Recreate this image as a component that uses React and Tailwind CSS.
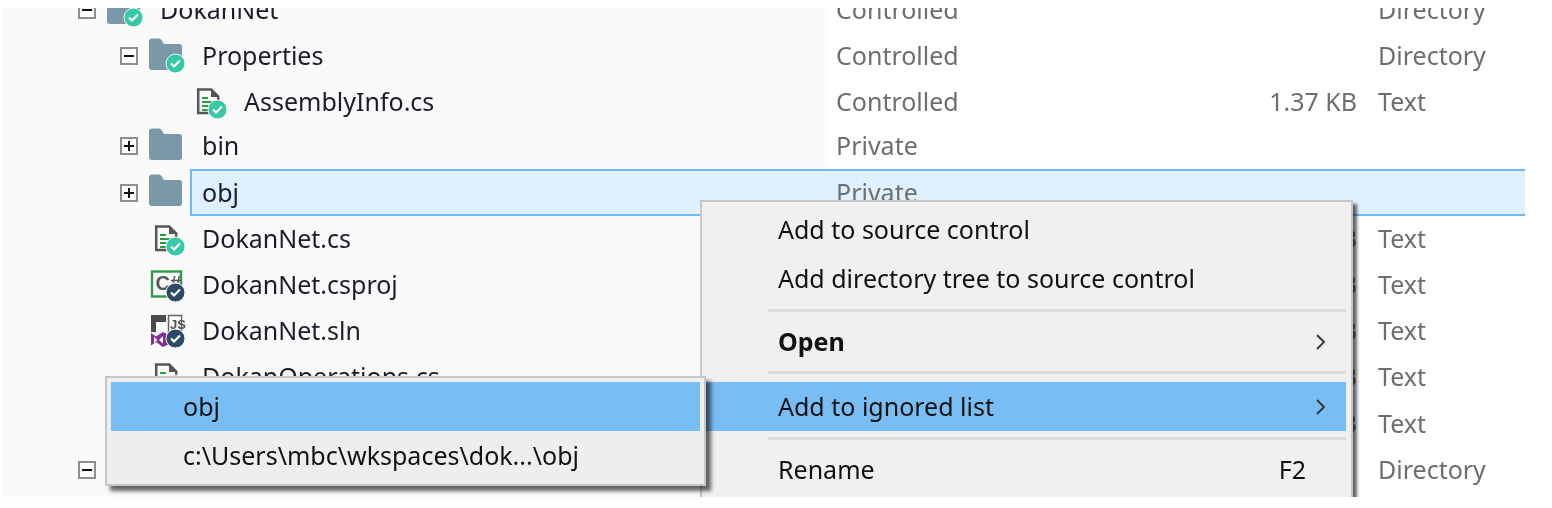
const Badge = ({ dark, x = 26.5, y = 23.5 }) => (
  <g>
    <circle cx={x} cy={y} r="9.5" fill={dark ? "#2c4a68" : "#35c9a5"} stroke="#fafafa" strokeWidth="1" />
    <path d={`M${x - 4.5} ${y}l3 3 6-6`} fill="none" stroke="#fff" strokeWidth="2.200" />
  </g>
);
const Folder = ({ badge }) => (
  <svg width="33" height="33" viewBox="0 0 33 33" className="shrink-0 overflow-visible">
    <path d="M0 1.500a3 3 0 0 1 3-3h7a3 3 0 0 1 2.500 1.500L15 4h15a3 3 0 0 1 3 3v20a3 3 0 0 1-3 3H3a3 3 0 0 1-3-3z" fill="#7b98a9" />
    {badge && <Badge />}
  </svg>
);
const FileI = () => (
  <svg width="33" height="33" viewBox="0 0 33 33" className="shrink-0 overflow-visible">
    <path d="M7.200 3.500h13l7 7v16.500h-20z" fill="#fafafa" stroke="#555" strokeWidth="2.500" />
    <path d="M20 3v8h8" fill="#555" />
    <path d="M11 12h6M11 16h12M11 20h9M11 24h9" stroke="#2f9a46" strokeWidth="2.200" />
    <Badge />
  </svg>
);
const Csproj = () => (
  <svg width="33" height="33" viewBox="0 0 33 33" className="shrink-0 overflow-visible">
    <rect x="3" y="2.500" width="29" height="25" fill="#fafafa" stroke="#2f9a46" strokeWidth="2.400" />
    <text x="6.500" y="21" fontSize="20" fontWeight="700" fill="#555" fontFamily="Liberation Sans, sans-serif">C#</text>
    <Badge dark />
  </svg>
);
const Sln = () => (
  <svg width="33" height="33" viewBox="0 0 33 33" className="shrink-0 overflow-visible">
    <path d="M2 0h15v7H7v10H2z" fill="#4b4b4b" />
    <rect x="19.500" y="0.500" width="13" height="17" fill="#fafafa" stroke="#666" strokeWidth="1.500" />
    <text x="21" y="14" fontSize="13" fontWeight="700" fill="#555" fontFamily="Liberation Sans, sans-serif">JS</text>
    <path d="M2 18l5 3.500 7-4.500 6 3v9l-6 3-7-5-5 3.500zM5 22v6l3.500-3zM14 21l-4 4 4 3.500z" fill="#7f2f97" fillRule="evenodd" />
    <Badge dark />
  </svg>
);
const Box = ({ sign }) => (
  <span className="w-[18px] h-[18px] shrink-0 border-2 border-[#8e8e8e] bg-white flex items-center justify-center relative">
    <span className="w-[10px] h-[2px] bg-[#111]"></span>
    {sign === "+" && <span className="absolute w-[2px] h-[10px] bg-[#111]"></span>}
  </span>
);

const rows = [
  { d: 78, box: "-", icon: <Folder badge />, name: "DokanNet", st: "Controlled", ty: "Directory" },
  { d: 120, box: "-", icon: <Folder badge />, name: "Properties", st: "Controlled", ty: "Directory" },
  { d: 162, icon: <FileI />, name: "AssemblyInfo.cs", st: "Controlled", size: "1.37 KB", ty: "Text", c: "h-[46px] -mb-[2px]" },
  { d: 120, box: "+", icon: <Folder />, name: "bin", st: "Private" },
  { d: 120, box: "+", icon: <Folder />, name: "obj", st: "Private", sel: true, c: "h-[47px]" },
  { d: 120, icon: <FileI />, name: "DokanNet.cs", size: "4.18 KB", ty: "Text" },
  { d: 120, icon: <Csproj />, name: "DokanNet.csproj", size: "6.23 KB", ty: "Text" },
  { d: 120, icon: <Sln />, name: "DokanNet.sln", size: "2.05 KB", ty: "Text" },
  { d: 120, icon: <FileI />, name: "DokanOperations.cs", size: "9.41 KB", ty: "Text" },
  { d: 120, size: "1.12 KB", ty: "Text", c: "h-[47px]" },
  { d: 78, box: "-", ty: "Directory" },
  { d: 78 },
];

const Row = ({ r }) => (
  <div className={`flex shrink-0 w-[1522px] bg-white ${r.c || "h-[46px]"}`}>
    <div className="flex items-center shrink-0 bg-[#fafafa]" style={{ width: r.d + 67 }}>
      <div className="flex items-center" style={{ paddingLeft: r.d - 3 }}>
        {r.box ? <Box sign={r.box} /> : <span className="w-[18px] shrink-0"></span>}
        <span className="w-[11px] shrink-0"></span>
        {r.icon}
      </div>
    </div>
    <div className={`flex flex-1 items-center min-w-0 ${r.sel ? "border-2 border-r-0 border-[#6fbaf5] bg-[#dff0fe] pl-[10px]" : "pl-3 bg-[#fafafa]"}`}>
      <div className="flex-1 min-w-0 text-[#1c1c2a] whitespace-nowrap">{r.name}</div>
    </div>
    <div className={`flex items-center shrink-0 w-[697px] pl-2 text-[#6e6e6e] whitespace-nowrap ${r.sel ? "border-y-2 border-[#6fbaf5] bg-[#dff0fe]" : ""}`}>
      <div className="w-[521px] shrink-0">{r.st}</div>
      <div className="w-[0px] shrink-0 flex justify-end"><span>{r.size}</span></div>
      <div className="pl-[21px]">{r.ty}</div>
    </div>
  </div>
);

const Item = ({ children, active, bold, right, h = "h-[49px]" }) => (
  <div className={`flex items-center ${h} ${active ? "bg-[#78bef5]" : ""} pl-[76px] text-[#111] whitespace-nowrap ${bold ? "font-bold" : ""}`}>
    <span className="flex-1">{children}</span>
    {right}
  </div>
);
const Sep = () => <div className="h-[3px] ml-[66px] bg-[#dcdcdc]"></div>;
const Chev = () => (
  <svg width="12" height="18" viewBox="0 0 12 18" className="mr-[19px]"><path d="M2 2l7 7-7 7" fill="none" stroke="#333" strokeWidth="1.800" /></svg>
);

export default function App() {
  return (
    <div className="w-[1552px] h-[508px] bg-white pt-2 pl-[3px] font-['Noto_Sans','Open_Sans',sans-serif] text-[25px] blur-[0.5px] overflow-hidden">
      <div className="relative h-[489px] overflow-hidden">
        <div className="flex flex-col -mt-[21px]">
          {rows.map((r, i) => <Row key={i} r={r} />)}
        </div>
        <div className="absolute left-[697px] top-[192px] w-[653px] h-[340px] bg-[#f0f0f0] border-2 border-[#c6c6c6] pr-[5px] shadow-[4px_4px_3px_rgba(0,0,0,0.6)]">
          <div className="pt-[3px]">
            <Item>Add to source control</Item>
            <Item>Add directory tree to source control</Item>
            <div className="h-[6px]"></div>
            <Sep />
            <div className="h-[3px]"></div>
            <Item bold right={<Chev />} h="h-[54px]">Open</Item>
            <div className="h-[2px]"></div>
            <Sep />
            <div className="h-[8px]"></div>
            <Item active right={<Chev />}>Add to ignored list</Item>
            <div className="h-[6px]"></div>
            <Sep />
            <div className="h-[5px]"></div>
            <Item right={<span className="mr-[40px]">F2</span>}>Rename</Item>
          </div>
        </div>
        <div className="absolute left-[102px] top-[368px] w-[601px] h-[110px] bg-[#eeeeee] border-2 border-[#c6c6c6] p-1 shadow-[5px_5px_4px_rgba(0,0,0,0.6)] text-[#111]">
          <div className="flex items-center h-[49px] bg-[#78bef5] pl-[72px]">obj</div>
          <div className="flex items-center h-[49px] pl-[72px] whitespace-nowrap">{"c:\\Users\\mbc\\wkspaces\\dok...\\obj"}</div>
        </div>
      </div>
    </div>
  );
}
